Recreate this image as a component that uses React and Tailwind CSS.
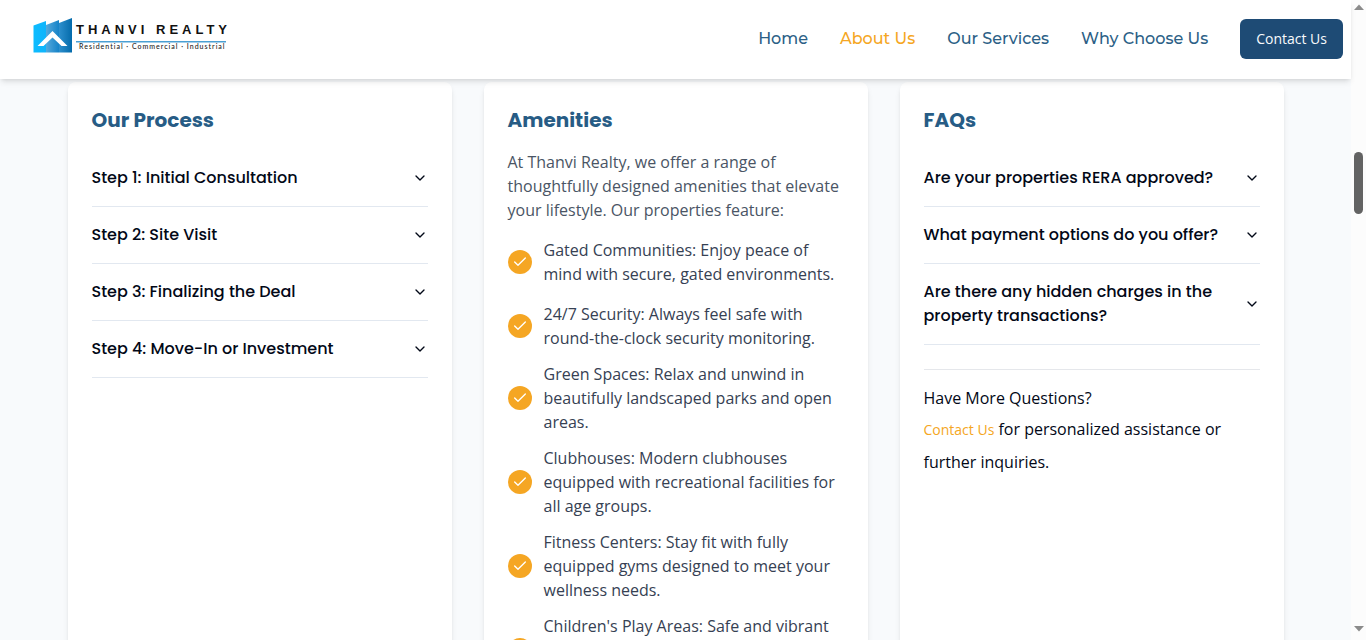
import { Check, ChevronDown } from "lucide-react";

const navLinks = [
  { label: "Home", active: false },
  { label: "About Us", active: true },
  { label: "Our Services", active: false },
  { label: "Why Choose Us", active: false },
];

const steps = [
  "Step 1: Initial Consultation",
  "Step 2: Site Visit",
  "Step 3: Finalizing the Deal",
  "Step 4: Move-In or Investment",
];

const amenities = [
  "Gated Communities: Enjoy peace of mind with secure, gated environments.",
  "24/7 Security: Always feel safe with round-the-clock security monitoring.",
  "Green Spaces: Relax and unwind in beautifully landscaped parks and open areas.",
  "Clubhouses: Modern clubhouses equipped with recreational facilities for all age groups.",
  "Fitness Centers: Stay fit with fully equipped gyms designed to meet your wellness needs.",
  "Children's Play Areas: Safe and vibrant",
];

const faqs = [
  "Are your properties RERA approved?",
  "What payment options do you offer?",
  "Are there any hidden charges in the property transactions?",
];

function Logo() {
  return (
    <svg viewBox="0 0 210 40" className="h-10 w-[210px]" role="img" aria-label="Thanvi Realty">
      <defs>
        <linearGradient id="left" x1="0" x2="1" y1="0" y2="0">
          <stop offset="0" stopColor="#0dbcff" />
          <stop offset="1" stopColor="#0fb4fb" />
        </linearGradient>
        <linearGradient id="mid" x1="0" x2="1" y1="0" y2="0">
          <stop offset="0" stopColor="#55a9dc" />
          <stop offset="1" stopColor="#1583c8" />
        </linearGradient>
        <linearGradient id="right" x1="0" x2="1" y1="0" y2="0">
          <stop offset="0" stopColor="#2c8fcd" />
          <stop offset="1" stopColor="#046bab" />
        </linearGradient>
      </defs>
      <path d="M1.500 8.500 14 4V35.500H1.500Z" fill="url(#left)" />
      <path d="M14 8 27 3V35.500H14Z" fill="url(#mid)" />
      <path d="M27 6 40 1V35.500H27Z" fill="url(#right)" />
      <path d="M5.500 29 20.500 14 35.500 29H29.500L20.500 20.500 11.500 29Z" fill="#fff" />
      <text x="44" y="17" className="fill-[#111111] font-['Liberation_Sans',sans-serif] text-[13px] font-bold tracking-[4px]">
        THANVI REALTY
      </text>
      <path d="M44 24H194V25.500H44Z" fill="#4a9fd3" />
      <text x="47" y="32" className="fill-[#222222] font-['Lato',sans-serif] text-[7px] font-medium tracking-[1px]">
        Residential · Commercial · Industrial
      </text>
    </svg>
  );
}

function Card({ title, children }) {
  return (
    <section className="rounded-lg bg-white p-6 shadow-md">
      <h2 className="mb-4 font-['Poppins','Inter',sans-serif] text-xl leading-7 font-bold text-[#275c85]">{title}</h2>
      {children}
    </section>
  );
}

function Accordion({ items }) {
  return (
    <div>
      {items.map((item) => (
        <h3 key={item} className="border-b border-slate-200">
          <button
            type="button"
            aria-expanded="false"
            className="flex w-full items-center justify-between gap-4 py-4 text-left font-['Poppins','Inter',sans-serif] text-base font-medium text-[#020817]"
          >
            {item}
            <ChevronDown className="size-4 shrink-0" />
          </button>
        </h3>
      ))}
    </div>
  );
}

export default function App() {
  return (
    <div className="flex h-screen overflow-hidden bg-slate-50 font-['Open_Sans',sans-serif] text-base text-[#020817]">
      <div className="flex min-w-0 flex-1 flex-col">
        <header className="z-10 flex items-center justify-between bg-white pt-[15px] pr-2 pb-5 pl-8 shadow-md">
          <a href="#home">
            <Logo />
          </a>
          <nav className="flex items-center gap-8 pt-1 font-['Montserrat','Inter',sans-serif] text-base font-medium">
            {navLinks.map(({ label, active }) => (
              <a key={label} href="#nav" className={active ? "text-[#f5a623]" : "text-[#2c5f86]"}>
                {label}
              </a>
            ))}
            <button
              type="button"
              className="h-10 rounded-md bg-[#1e4b75] px-4 font-['Open_Sans',sans-serif] text-sm font-medium text-slate-50"
            >
              Contact Us
            </button>
          </nav>
        </header>

        <main className="min-h-0 flex-1 overflow-hidden pt-[3px]">
          <div className="mx-auto grid max-w-7xl grid-cols-3 gap-8 px-8 pb-12">
            <Card title="Our Process">
              <Accordion items={steps} />
            </Card>

            <Card title="Amenities">
              <p className="mb-4 text-gray-600">
                At Thanvi Realty, we offer a range of thoughtfully designed amenities that elevate your lifestyle. Our
                properties feature:
              </p>
              <ul className="text-gray-700">
                {amenities.map((text) => (
                  <li key={text} className="mb-3 flex items-center gap-3 first:mb-4 last:min-h-[72px]">
                    <span className="flex size-6 shrink-0 items-center justify-center rounded-full bg-[#f5a623] text-white">
                      <Check className="size-4" strokeWidth={2} />
                    </span>
                    <span className="self-start">{text}</span>
                  </li>
                ))}
              </ul>
            </Card>

            <Card title="FAQs">
              <Accordion items={faqs} />
              <div className="mt-6 border-t border-gray-200 pt-4">
                <p>Have More Questions?</p>
                <p className="mt-[3px] leading-[33px]">
                  <a href="#contact" className="text-sm leading-none text-[#f5a623]">
                    Contact Us
                  </a>{" "}
                  for personalized assistance or further inquiries.
                </p>
              </div>
            </Card>
          </div>
        </main>
      </div>

      <div aria-hidden="true" className="flex w-[15px] shrink-0 flex-col items-center bg-[#fcfcfc] py-1">
        <svg viewBox="0 0 10 6" className="h-[6px] w-[10px] fill-[#8b8b8b]">
          <path d="M5 0.500 10 6H0Z" />
        </svg>
        <div className="mt-[142px] h-[62px] w-[9px] rounded-full bg-[#636363]" />
        <svg viewBox="0 0 10 6" className="mt-auto mb-1 h-[6px] w-[10px] fill-[#8b8b8b]">
          <path d="M5 5.500 10 0H0Z" />
        </svg>
      </div>
    </div>
  );
}
